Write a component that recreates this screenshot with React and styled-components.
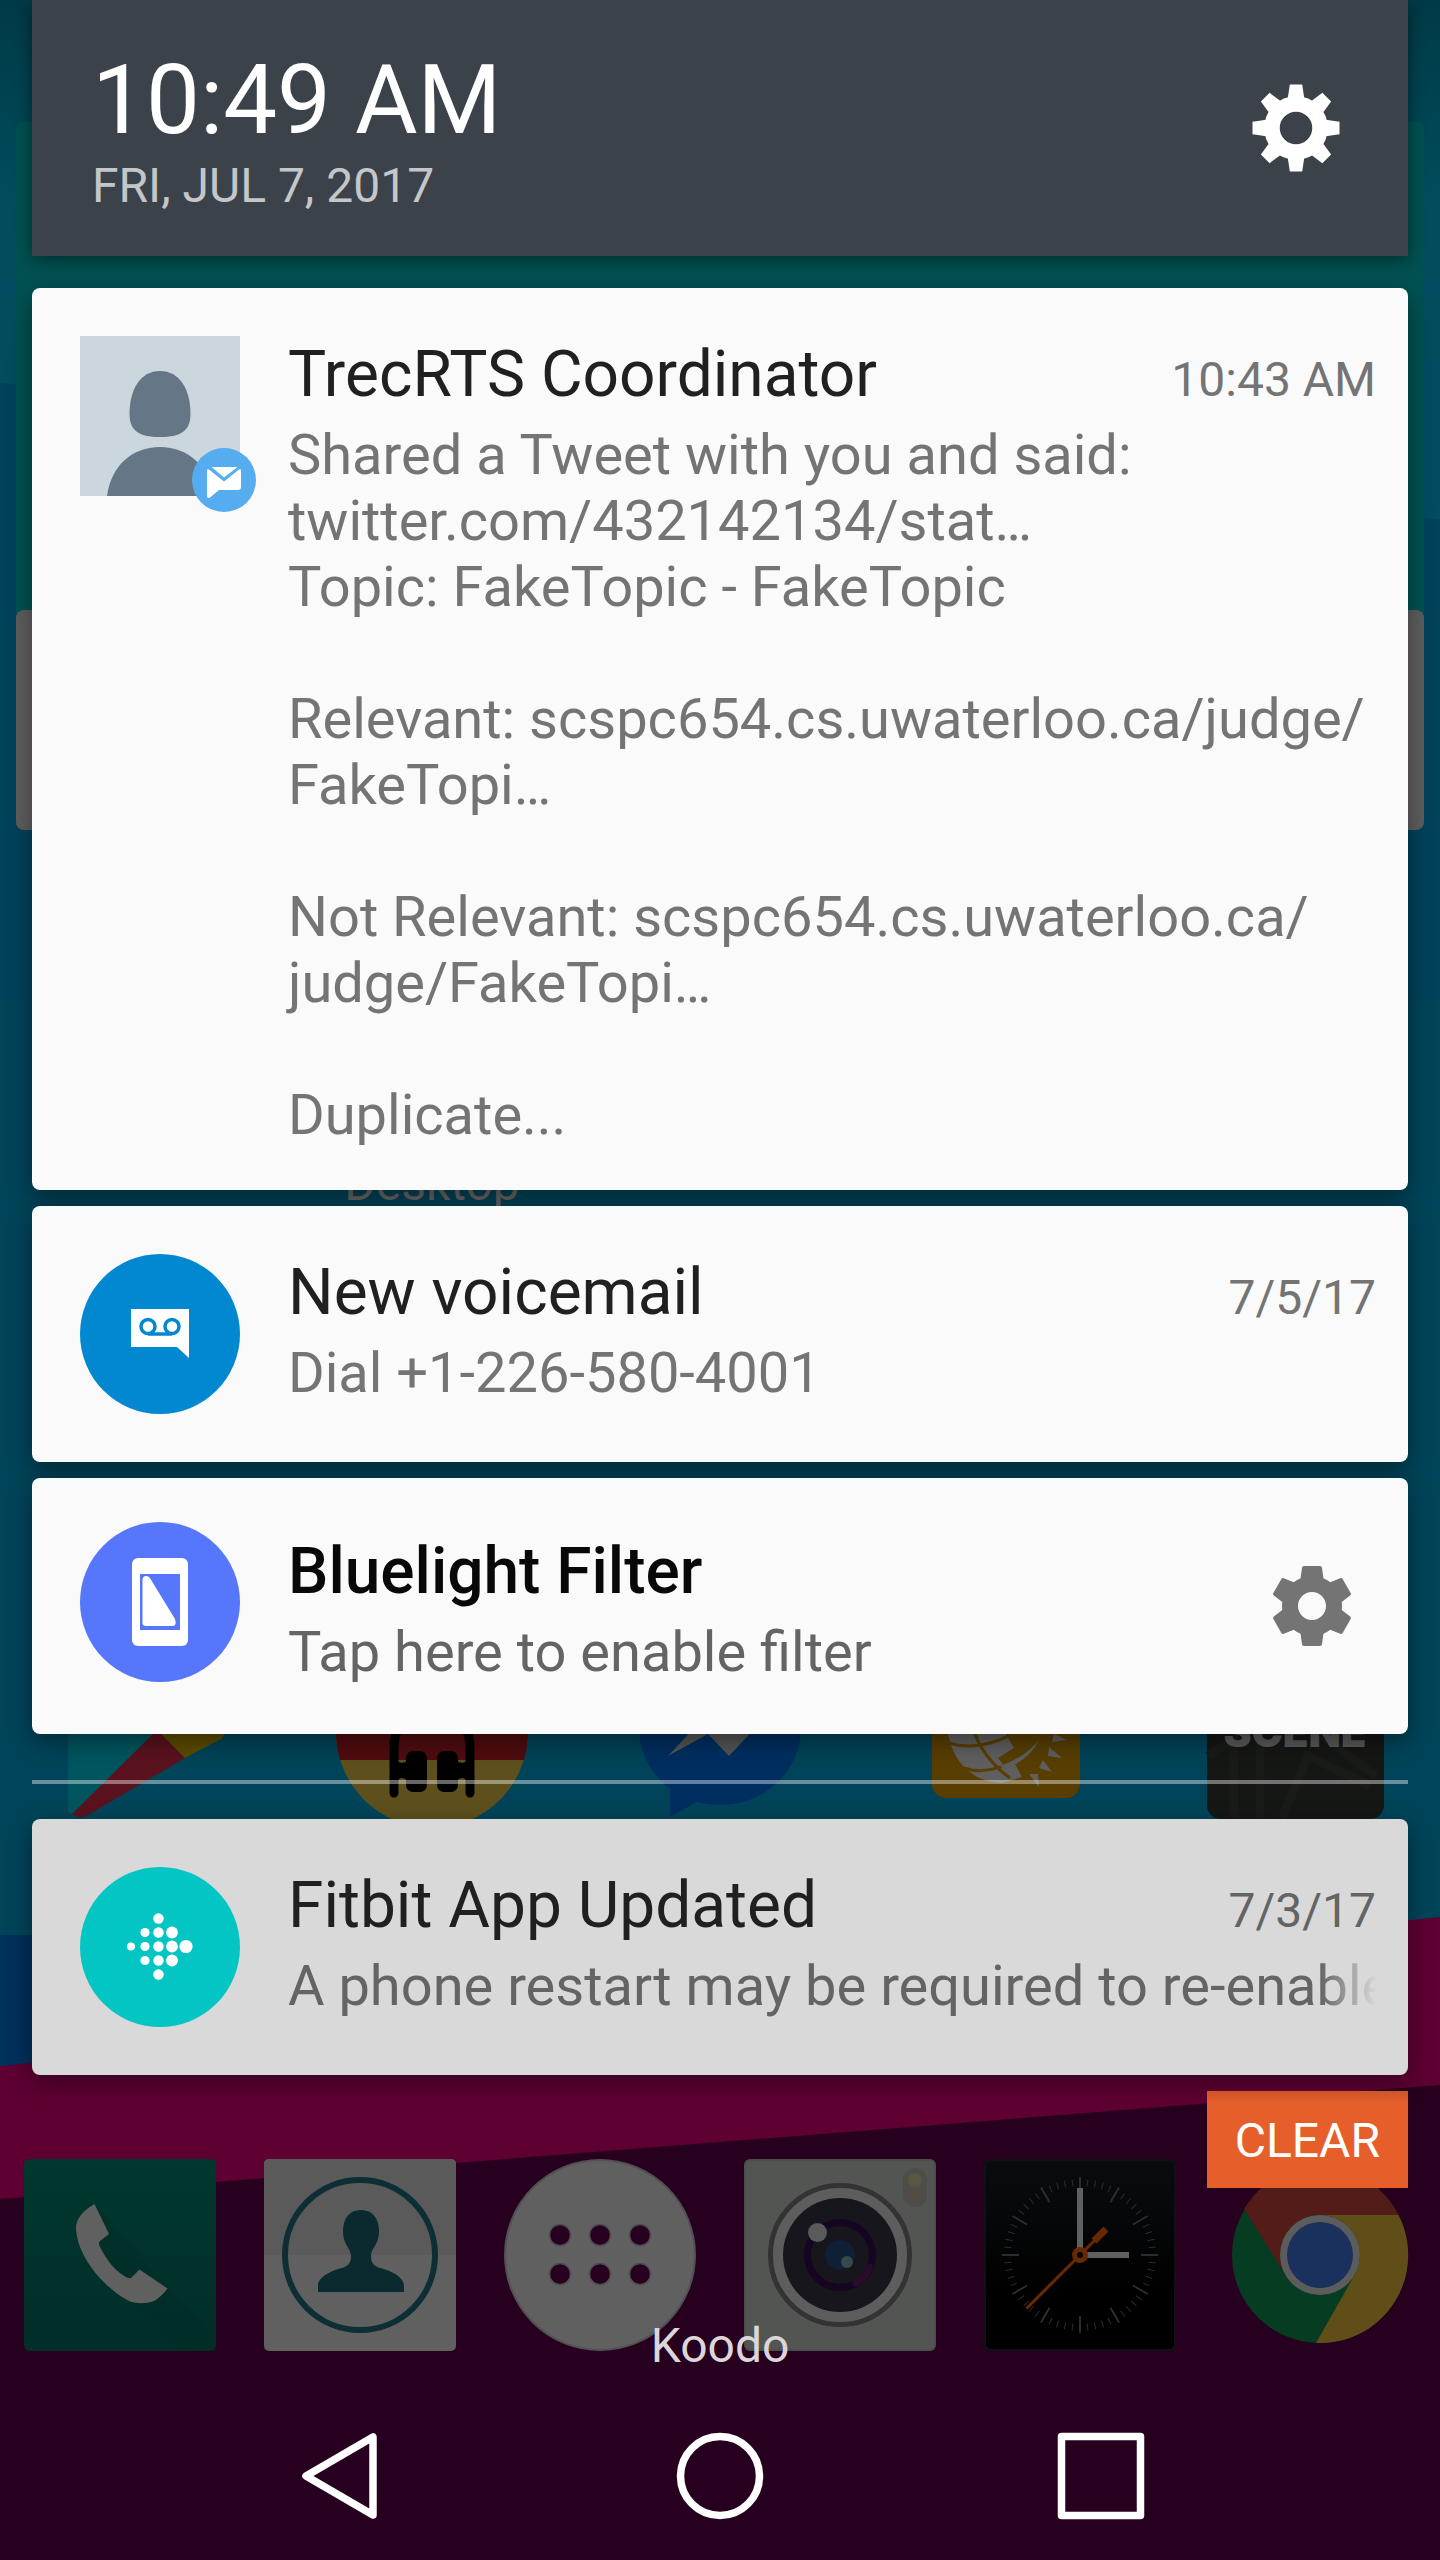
import React from "react";
import styled, { createGlobalStyle } from "styled-components";

const GlobalStyle = createGlobalStyle`
  *, *::before, *::after { box-sizing: border-box; }
  body { margin: 0; background: #26001e; }
  button { margin: 0; padding: 0; border: 0; background: none; font: inherit; color: inherit; cursor: pointer; }
  h1, h2, p { margin: 0; font-weight: 400; }
  svg { display: block; }
`;

const Screen = styled.div`
  position: relative;
  min-height: 100vh;
  overflow: hidden;
  font-family: Roboto, "Noto Sans", sans-serif;
`;

/* ---------- home screen behind the shade ---------- */

const Home = styled.div`
  position: absolute;
  inset: 0;
  display: flex;
  flex-direction: column;
`;

const WallpaperSvg = styled.svg`
  position: absolute;
  inset: 0;
  width: 100%;
  height: 100%;
`;

const Widget = styled.div`
  position: relative;
  margin: 122px 16px 0;
  height: 708px;
  border-radius: 8px;
  overflow: hidden;
  background: #005152;
  display: flex;
  flex-direction: column;
  justify-content: flex-end;
`;

const WidgetPanel = styled.div`
  height: 220px;
  background: #5e5e5e;
  border-radius: 8px 8px 0 0;
`;

const HomeGrid = styled.div`
  position: relative;
  display: grid;
  grid-template-columns: repeat(5, 1fr);
  justify-items: center;
  margin-top: ${(p) => p.$gap}px;
`;

const FolderLabel = styled.span`
  grid-column: 2;
  font-size: 48px;
  line-height: 56px;
  color: #6a6767;
`;

const Dock = styled.div`
  position: relative;
  display: grid;
  grid-template-columns: repeat(6, 1fr);
  justify-items: center;
  margin-top: auto;
  padding-bottom: 209px;
`;

/* ---------- notification shade ---------- */

const Shade = styled.div`
  position: relative;
  min-height: 100vh;
  display: flex;
  flex-direction: column;
`;

const Header = styled.header`
  margin: 0 32px;
  height: 256px;
  padding: 0 60px;
  display: flex;
  align-items: center;
  justify-content: space-between;
  background: #3b4249;
  box-shadow: 0 4px 16px rgba(0, 0, 0, 0.45);
`;

const Clock = styled.h1`
  font-size: 96px;
  line-height: 116px;
  color: #fff;
`;

const DateLine = styled.p`
  font-size: 48px;
  line-height: 56px;
  color: #c4c7c9;
`;

const IconButton = styled.button`
  width: 104px;
  height: 104px;
  display: grid;
  place-items: center;
`;

const List = styled.main`
  margin: 32px 32px 0;
  display: flex;
  flex-direction: column;
  gap: 16px;
`;

const Card = styled.article`
  display: flex;
  align-items: flex-start;
  min-height: 256px;
  padding: 0 32px 0 48px;
  gap: 48px;
  border-radius: 8px;
  background: ${(p) => (p.$dim ? "#d9d9d9" : "#fafafa")};
  box-shadow: 0 8px 24px rgba(0, 0, 0, 0.4);
`;

const CardIcon = styled.div`
  position: relative;
  flex: none;
  width: 160px;
  height: 160px;
  margin-top: ${(p) => p.$top}px;
`;

const Badge = styled.div`
  position: absolute;
  right: -16px;
  bottom: -16px;
`;

const CardText = styled.div`
  flex: 1;
  min-width: 0;
  padding: ${(p) => p.$top}px 0 42px;
  display: flex;
  flex-direction: column;
  gap: 8px;
  color: ${(p) => (p.$dark ? "#646464" : "#747474")};
`;

const TitleRow = styled.div`
  display: flex;
  align-items: baseline;
  justify-content: space-between;
`;

const Title = styled.h2`
  font-size: 64px;
  line-height: 78px;
  font-weight: ${(p) => (p.$bold ? 500 : 400)};
  color: ${(p) => (p.$bold ? "#080808" : "#202020")};
`;

const Stamp = styled.time`
  font-size: 48px;
  line-height: 56px;
`;

const Body = styled.p`
  font-size: 56px;
  line-height: 66px;
  white-space: pre-line;
`;

const FadedBody = styled(Body)`
  white-space: nowrap;
  overflow: hidden;
  mask-image: linear-gradient(to right, #000 calc(100% - 56px), transparent);
`;

const CardAction = styled.button`
  align-self: center;
  width: 96px;
  height: 96px;
  margin-right: 16px;
`;

const Divider = styled.hr`
  width: calc(100% - 64px);
  height: 4px;
  margin: 46px 32px 3px;
  border: 0;
  background: rgba(255, 255, 255, 0.4);
`;

const ClearButton = styled.button`
  align-self: flex-end;
  margin: 16px 32px 0;
  padding: 22px 28px 19px;
  background: linear-gradient(#cf5526, #e65f2b 14px);
  font-size: 48px;
  line-height: 56px;
  color: #fff;
`;

const Carrier = styled.p`
  margin: auto 0 18px;
  text-align: center;
  font-size: 48px;
  line-height: 56px;
  color: #dcd6da;
`;

const NavBar = styled.nav`
  height: 168px;
  display: flex;
  align-items: center;
  justify-content: center;
  gap: 284px;
`;

const NavButton = styled.button`
  width: 96px;
  height: 96px;
`;

/* ---------- drawings ---------- */

function Wallpaper() {
  return (
    <WallpaperSvg viewBox="0 0 1440 2560" preserveAspectRatio="none">
      <defs>
        <linearGradient id="wpTop" x1="0" y1="0" x2="0" y2="1">
          <stop offset="0" stopColor="#003a46" />
          <stop offset="0.4" stopColor="#004d5e" />
          <stop offset="1" stopColor="#004c60" />
        </linearGradient>
      </defs>
      <rect width="1440" height="2560" fill="#004459" />
      <polygon points="0,0 1440,0 1440,520 0,383" fill="url(#wpTop)" />
      <polygon points="0,383 1440,520 1440,1000 0,1000" fill="#00425a" />
      <rect y="1935" width="720" height="200" fill="#00305c" />
      <polygon points="0,2066 1440,1917 1440,2560 0,2560" fill="#5e0032" />
      <polygon points="0,2199 1440,2085 1440,2560 0,2560" fill="#26001e" />
    </WallpaperSvg>
  );
}

const Tile = ({ children }) => (
  <svg width="192" height="192" viewBox="0 0 192 192">{children}</svg>
);

const PlayIcon = () => (
  <Tile>
    <path d="M20 20V172Q20 178 25 178L105 98 60 40Z" fill="#00555f" />
    <path d="M105 98L24 178Q32 184 40 179L137 122 112 96Z" fill="#5a121e" />
    <path d="M108 92L112 97 137 122 173 103Q180 98 174 90Z" fill="#5c4b00" />
  </Tile>
);

const HeadphonesIcon = () => (
  <Tile>
    <circle cx="96" cy="96" r="96" fill="#5e501c" />
    <path d="M4 124A96 96 0 1 1 188 124Z" fill="#500c0f" />
    <path d="M58 157V112Q58 92 72 80M134 157V112Q134 92 120 80" stroke="#000" strokeWidth="9" strokeLinecap="round" fill="none" />
    <path d="M60 124Q66 130 72 124V146Q66 138 60 146ZM132 124Q126 130 120 124V146Q126 138 132 146Z" />
    <rect x="70" y="115" width="21" height="41" rx="7" />
    <rect x="101" y="115" width="21" height="41" rx="7" />
  </Tile>
);

const MessengerIcon = () => (
  <Tile>
    <path d="M46 148V181L74 165Z" fill="#002e60" />
    <ellipse cx="96" cy="92" rx="81" ry="77" fill="#002e60" />
    <path d="M44 120L86 75 107 97 147 75 105 120 84 98Z" fill="#555" />
  </Tile>
);

const GlobeIcon = () => (
  <Tile>
    <rect x="20" y="14" width="148" height="148" rx="14" fill="#583e00" />
    <path d="M35 92C40 128 62 146 90 147L110 141 103 128 94 132 86 122 102 112 95 100 90 84Z" fill="#5f5f5f" />
    <path d="M37 107Q72 118 118 88M52 132Q75 140 104 124M60 90Q70 122 98 142" stroke="#583e00" strokeWidth="3" fill="none" />
    <path d="M92 133Q118 124 127 104Q112 122 88 130Z" fill="#5f5f5f" />
    <path d="M142 98L155 104 140 106ZM137 111L150 122 136 120ZM131 124L140 136 127 132ZM117 138L126 138 127 151Z" fill="#5f5f5f" />
  </Tile>
);

const SceneIcon = () => (
  <Tile>
    <rect x="7" y="6" width="177" height="177" rx="14" fill="#151714" />
    <path d="M8 120L34 104V182M60 98V182M82 182L108 120 170 150M120 98L176 140" stroke="#191b18" strokeWidth="9" fill="none" />
    <text x="95" y="111" textAnchor="middle" fontFamily="Inter, Roboto, sans-serif" fontWeight="900" fontSize="42" fill="#5a5a5a">SCENE</text>
  </Tile>
);

const PhoneIcon = () => (
  <Tile>
    <defs>
      <linearGradient id="phoneBg" x1="0" y1="0" x2="0" y2="1">
        <stop offset="0" stopColor="#00372f" />
        <stop offset="1" stopColor="#002e28" />
      </linearGradient>
    </defs>
    <rect width="192" height="192" rx="6" fill="url(#phoneBg)" />
    <path d="M72 46L145 130 192 178V192H160L106 140 76 84Z" fill="#002a25" opacity="0.3" />
    <path d="M70.500 45L85 75 76 82Q74 84 76 88C83 102 93 114 104 119Q107 120 109 117L115.500 110.500 143.500 129.500Q138 137 131 141.500C124 145 111 145 104 141.500C76 126 52 94 52 68Q53 55 70.500 45Z" fill="#606060" />
  </Tile>
);

const ContactsIcon = () => (
  <Tile>
    <rect width="192" height="192" rx="5" fill="#606060" />
    <path d="M0 96V5Q0 0 5 0H187Q192 0 192 5V96Z" fill="#5a5a5a" />
    <circle cx="96" cy="96" r="75" fill="none" stroke="#0c2e34" strokeWidth="6" />
    <path d="M97 51C109 51 115 60 115 72C115 86 107 89 107 97C107 104 110 107 116 109C128 112 140 118 140 127V133H54V127C54 118 66 112 78 109C84 107 87 104 87 97C87 89 79 86 79 72C79 60 85 51 97 51Z" fill="#0a2a2f" />
  </Tile>
);

const AppsIcon = () => (
  <Tile>
    <circle cx="96" cy="96" r="95" fill="#606060" stroke="#525052" strokeWidth="2" />
    {[56, 96, 136].map((x) =>
      [76, 115].map((y) => (
        <circle key={`${x}-${y}`} cx={x} cy={y} r="10.500" fill="#26001e" stroke="#504c50" strokeWidth="1.500" />
      ))
    )}
  </Tile>
);

const CameraIcon = () => (
  <Tile>
    <rect x="1" y="1" width="190" height="190" rx="5" fill="#535553" stroke="#4c4e4c" strokeWidth="2" />
    <circle cx="96" cy="96" r="69.500" fill="#5d5d5d" stroke="#333" strokeWidth="5" />
    <circle cx="96" cy="96" r="57" fill="#17161c" />
    <circle cx="96" cy="96" r="32.500" fill="none" stroke="#150422" strokeWidth="7" />
    <path d="M126 108A32.500 32.500 0 0 1 112 124" fill="none" stroke="#280c29" strokeWidth="7" strokeLinecap="round" />
    <circle cx="96" cy="96" r="15" fill="#0f1f36" />
    <circle cx="103" cy="103" r="6" fill="#344b4c" />
    <circle cx="73.500" cy="73.500" r="9.500" fill="#5a5a5a" />
    <rect x="159" y="9" width="24" height="39" rx="12" fill="#4d4d4b" />
    <circle cx="171" cy="21" r="7" fill="#58573f" />
    <circle cx="171" cy="36" r="7" fill="#544b42" />
  </Tile>
);

const ClockIcon = () => (
  <Tile>
    <defs>
      <linearGradient id="clockBg" x1="0" y1="0" x2="0" y2="1">
        <stop offset="0" stopColor="#0a0c0f" />
        <stop offset="0.7" stopColor="#000" />
      </linearGradient>
    </defs>
    <rect x="1" y="1" width="190" height="190" rx="6" fill="url(#clockBg)" stroke="#0e1215" strokeWidth="2" />
    {Array.from({ length: 60 }, (_, i) => (
      <path
        key={i}
        d={i % 5 ? "M96 20V27" : "M96 18V35"}
        stroke="#2c2d2e"
        strokeWidth={i % 5 ? 1 : 2}
        transform={`rotate(${i * 6} 96 96)`}
      />
    ))}
    <path d="M96 29V90" stroke="#606060" strokeWidth="6" />
    <path d="M102 96H145" stroke="#606060" strokeWidth="6" />
    <path d="M42.500 149.500L113 79" stroke="#6a2800" strokeWidth="3" />
    <path d="M110 82L122 70" stroke="#6a2800" strokeWidth="7" />
    <circle cx="96" cy="96" r="5.500" fill="#000" stroke="#6a2800" strokeWidth="5" />
  </Tile>
);

const ChromeIcon = () => (
  <Tile>
    <circle cx="96" cy="96" r="88" fill="#063c22" />
    <path d="M20 50A88 88 0 0 1 174.500 56H96A40 40 0 0 0 61.400 116Z" fill="#541c18" />
    <path d="M174.500 56A88 88 0 0 1 92 184L130.600 116A40 40 0 0 0 96 56Z" fill="#604e18" />
    <circle cx="96" cy="96" r="40" fill="#5c5c5c" />
    <circle cx="96" cy="96" r="33" fill="#19315c" />
  </Tile>
);

const HeaderGear = () => (
  <svg width="88" height="88" viewBox="-44 -44 88 88">
    <circle r="24" fill="none" stroke="#fff" strokeWidth="15.500" />
    {[0, 45, 90, 135, 180, 225, 270, 315].map((a) => (
      <path key={a} d="M-8.500 -28L-6.200 -43.500H6.200L8.500 -28Z" fill="#fff" transform={`rotate(${a})`} />
    ))}
  </svg>
);

const SettingsGear = () => (
  <svg width="96" height="96" viewBox="0 0 24 24" fill="#747474">
    <path d="M19.430 12.980c.04-.32.07-.64.07-.98s-.03-.66-.07-.98l2.110-1.650c.19-.15.24-.42.12-.64l-2-3.460c-.12-.22-.39-.3-.61-.22l-2.490 1c-.52-.4-1.080-.73-1.690-.98l-.38-2.650C14.460 2.180 14.250 2 14 2h-4c-.25 0-.46.18-.49.42l-.38 2.650c-.61.25-1.170.59-1.690.98l-2.490-1c-.23-.09-.49 0-.61.22l-2 3.460c-.13.22-.07.49.12.64l2.110 1.650c-.04.32-.07.65-.07.98s.03.66.07.98l-2.110 1.650c-.19.15-.24.42-.12.64l2 3.460c.12.22.39.3.61.22l2.490-1c.52.4 1.080.73 1.690.98l.38 2.650c.03.24.24.42.49.42h4c.25 0 .46-.18.49-.42l.38-2.650c.61-.25 1.170-.59 1.690-.98l2.490 1c.23.09.49 0 .61-.22l2-3.460c.12-.22.07-.49-.12-.64l-2.110-1.650zM12 15.500c-1.930 0-3.500-1.570-3.500-3.500s1.570-3.500 3.500-3.500 3.500 1.570 3.500 3.500-1.570 3.500-3.500 3.500z" />
  </svg>
);

const Avatar = () => (
  <svg width="160" height="160" viewBox="0 0 160 160">
    <rect width="160" height="160" fill="#ccd6dd" />
    <path d="M80 35C100 35 110.500 54 110.500 78C110.500 94 102 101 80 101S49.500 94 49.500 78C49.500 54 60 35 80 35Z" fill="#657786" />
    <path d="M27 160C31 130 52 111 80 111S129 130 133 160Z" fill="#657786" />
  </svg>
);

const MessageBadge = () => (
  <svg width="64" height="64" viewBox="0 0 64 64">
    <circle cx="32" cy="32" r="32" fill="#55acee" />
    <path d="M19.500 19H45.500L32 29.500Z" fill="#fff" />
    <path d="M15 22.500Q15 20.500 17 21.500L32 33.500 47 21.500Q49 20.500 49 22.500V39Q49 42 46 42H27L18 49.500Q15 51 15 48Z" fill="#fff" />
  </svg>
);

const VoicemailIcon = () => (
  <svg width="160" height="160" viewBox="0 0 160 160">
    <circle cx="80" cy="80" r="80" fill="#0288d1" />
    <path d="M51 55H109V104L97 93H51Z" fill="#fff" />
    <circle cx="68" cy="72.500" r="7" fill="none" stroke="#0288d1" strokeWidth="3.500" />
    <circle cx="92" cy="72.500" r="7" fill="none" stroke="#0288d1" strokeWidth="3.500" />
    <path d="M68 80H92" stroke="#0288d1" strokeWidth="3.500" />
  </svg>
);

const BluelightIcon = () => (
  <svg width="160" height="160" viewBox="0 0 160 160">
    <circle cx="80" cy="80" r="80" fill="#5677fc" />
    <rect x="52" y="36" width="56" height="88" rx="6" fill="#fff" />
    <rect x="60" y="52" width="40" height="56" fill="#5677fc" />
    <path d="M62.500 58Q62.500 54 66 54Q69 54 70.500 57L95 97Q97 104 93 104H66Q62.500 104 62.500 101Z" fill="#fff" />
  </svg>
);

const fitbitColumns = [
  { x: 51, r: 4, rows: [0] },
  { x: 65, r: 4.6, rows: [-1, 0, 1] },
  { x: 78.5, r: 5.2, rows: [-2, -1, 0, 1, 2] },
  { x: 92, r: 5.9, rows: [-1, 0, 1] },
  { x: 106, r: 6.6, rows: [0] },
];

const FitbitIcon = () => (
  <svg width="160" height="160" viewBox="0 0 160 160">
    <circle cx="80" cy="80" r="80" fill="#02c5c4" />
    {fitbitColumns.map((c) =>
      c.rows.map((row) => (
        <circle key={`${c.x}-${row}`} cx={c.x} cy={79.5 + row * 14} r={c.r} fill="#fff" />
      ))
    )}
  </svg>
);

const NavShape = ({ children }) => (
  <svg width="96" height="96" viewBox="0 0 96 96" fill="none" stroke="#fff" strokeWidth="7.500" strokeLinejoin="round">
    {children}
  </svg>
);

/* ---------- page ---------- */

const tweetText = [
  "Shared a Tweet with you and said:",
  "twitter.com/432142134/stat…",
  "Topic: FakeTopic - FakeTopic",
  "",
  "Relevant: scspc654.cs.uwaterloo.ca/judge/",
  "FakeTopi…",
  "",
  "Not Relevant: scspc654.cs.uwaterloo.ca/",
  "judge/FakeTopi…",
  "",
  "Duplicate...",
].join("\n");

export default function App() {
  return (
    <Screen>
      <GlobalStyle />
      <Home aria-hidden="true">
        <Wallpaper />
        <Widget>
          <WidgetPanel />
        </Widget>
        <HomeGrid $gap={326}>
          <FolderLabel>Desktop</FolderLabel>
        </HomeGrid>
        <HomeGrid $gap={424}>
          <PlayIcon />
          <HeadphonesIcon />
          <MessengerIcon />
          <GlobeIcon />
          <SceneIcon />
        </HomeGrid>
        <Dock>
          <PhoneIcon />
          <ContactsIcon />
          <AppsIcon />
          <CameraIcon />
          <ClockIcon />
          <ChromeIcon />
        </Dock>
      </Home>

      <Shade>
        <Header>
          <div>
            <Clock>10:49 AM</Clock>
            <DateLine>FRI, JUL 7, 2017</DateLine>
          </div>
          <IconButton type="button" aria-label="Settings">
            <HeaderGear />
          </IconButton>
        </Header>

        <List>
          <Card>
            <CardIcon $top={48}>
              <Avatar />
              <Badge>
                <MessageBadge />
              </Badge>
            </CardIcon>
            <CardText $top={48}>
              <TitleRow>
                <Title>TrecRTS Coordinator</Title>
                <Stamp>10:43 AM</Stamp>
              </TitleRow>
              <Body>{tweetText}</Body>
            </CardText>
          </Card>

          <Card>
            <CardIcon $top={48}>
              <VoicemailIcon />
            </CardIcon>
            <CardText $top={48}>
              <TitleRow>
                <Title>New voicemail</Title>
                <Stamp>7/5/17</Stamp>
              </TitleRow>
              <Body>Dial +1-226-580-4001</Body>
            </CardText>
          </Card>

          <Card>
            <CardIcon $top={44}>
              <BluelightIcon />
            </CardIcon>
            <CardText $top={55} $dark>
              <Title $bold>Bluelight Filter</Title>
              <Body>Tap here to enable filter</Body>
            </CardText>
            <CardAction type="button" aria-label="Filter settings">
              <SettingsGear />
            </CardAction>
          </Card>
        </List>

        <Divider />

        <List as="section">
          <Card $dim>
            <CardIcon $top={48}>
              <FitbitIcon />
            </CardIcon>
            <CardText $top={48} $dark>
              <TitleRow>
                <Title>Fitbit App Updated</Title>
                <Stamp>7/3/17</Stamp>
              </TitleRow>
              <FadedBody>A phone restart may be required to re-enable</FadedBody>
            </CardText>
          </Card>
        </List>

        <ClearButton type="button">CLEAR</ClearButton>

        <Carrier>Koodo</Carrier>

        <NavBar aria-label="System navigation">
          <NavButton type="button" aria-label="Back">
            <NavShape>
              <path d="M81 9V87L14 48Z" />
            </NavShape>
          </NavButton>
          <NavButton type="button" aria-label="Home">
            <NavShape>
              <circle cx="48" cy="48" r="39.500" />
            </NavShape>
          </NavButton>
          <NavButton type="button" aria-label="Recent apps">
            <NavShape>
              <rect x="9.500" y="8.500" width="79" height="79" />
            </NavShape>
          </NavButton>
        </NavBar>
      </Shade>
    </Screen>
  );
}
